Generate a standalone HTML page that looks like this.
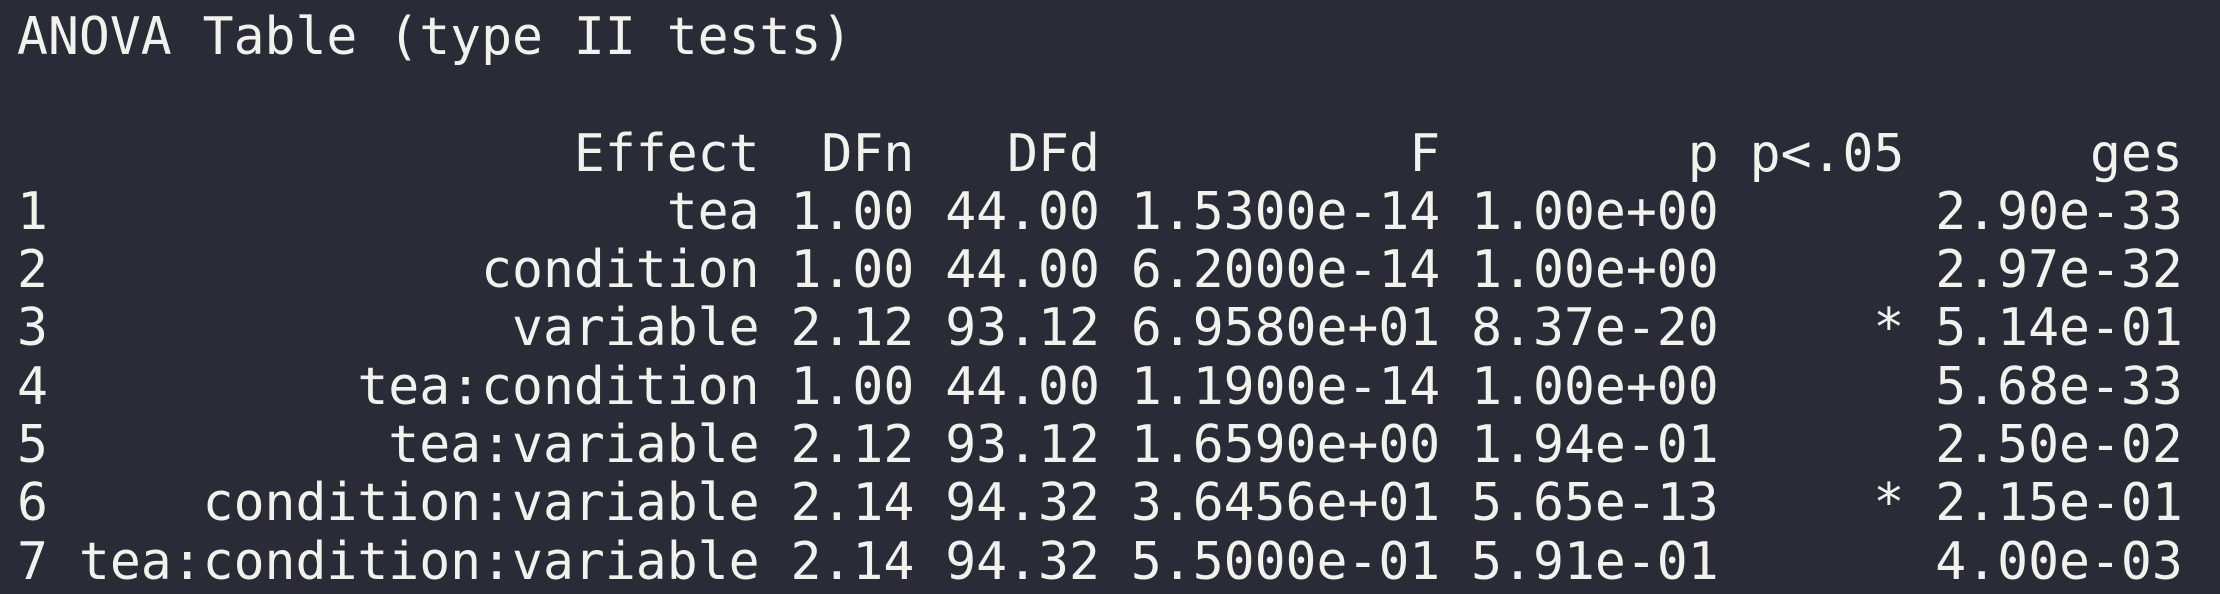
<!DOCTYPE html>
<html><head><meta charset="utf-8"><style>
html,body{margin:0;padding:0;background:#292b36;width:2220px;height:594px;overflow:hidden}
pre{margin:0;padding:8px 0 0 17px;font-family:"DejaVu Sans Mono","Liberation Mono",monospace;font-size:51.4px;line-height:58.3px;color:#f2f2ec;white-space:pre}
</style></head><body><pre>ANOVA Table (type II tests)

                  Effect  DFn   DFd          F        p p&lt;.05      ges
1                    tea 1.00 44.00 1.5300e-14 1.00e+00       2.90e-33
2              condition 1.00 44.00 6.2000e-14 1.00e+00       2.97e-32
3               variable 2.12 93.12 6.9580e+01 8.37e-20     * 5.14e-01
4          tea:condition 1.00 44.00 1.1900e-14 1.00e+00       5.68e-33
5           tea:variable 2.12 93.12 1.6590e+00 1.94e-01       2.50e-02
6     condition:variable 2.14 94.32 3.6456e+01 5.65e-13     * 2.15e-01
7 tea:condition:variable 2.14 94.32 5.5000e-01 5.91e-01       4.00e-03</pre></body></html>
